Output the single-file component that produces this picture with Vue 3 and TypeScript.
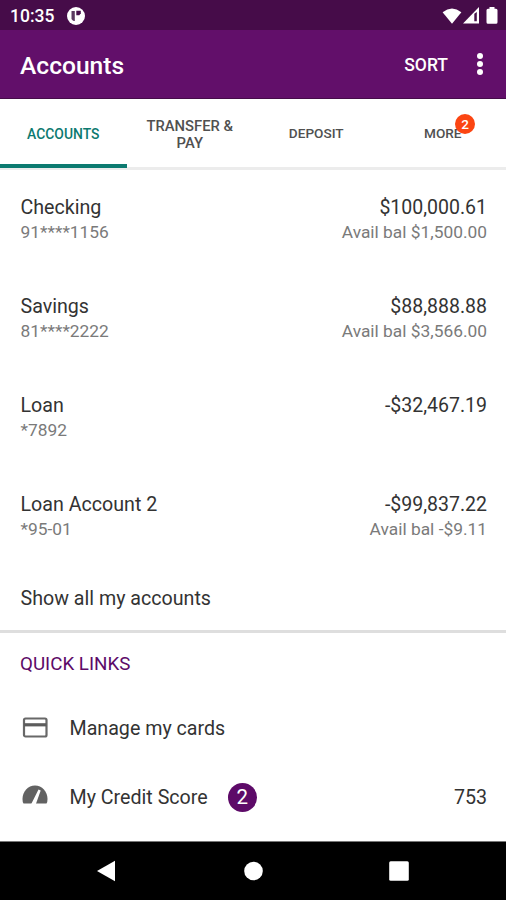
<script setup lang="ts">
interface Account {
  name: string
  number: string
  balance: string
  available?: string
}

interface Tab {
  label: string
  active?: boolean
  wrapped?: boolean
  badge?: number
}

const tabs: Tab[] = [
  { label: 'ACCOUNTS', active: true },
  { label: 'TRANSFER & PAY', wrapped: true },
  { label: 'DEPOSIT' },
  { label: 'MORE', badge: 2 },
]

const accounts: Account[] = [
  { name: 'Checking', number: '91****1156', balance: '$100,000.61', available: '$1,500.00' },
  { name: 'Savings', number: '81****2222', balance: '$88,888.88', available: '$3,566.00' },
  { name: 'Loan', number: '*7892', balance: '-$32,467.19' },
  { name: 'Loan Account 2', number: '*95-01', balance: '-$99,837.22', available: '-$9.11' },
]
</script>

<template>
  <div class="screen">
    <div class="status-bar">
      <span class="clock">10:35</span>
      <svg class="app-icon" width="18" height="18" viewBox="0 0 18 18">
        <circle cx="9" cy="9" r="9" fill="#fff" />
        <path d="M4.500 4h3.300v10H6.800A5 5 0 0 1 4.500 12z" fill="#5a3a60" />
        <path d="M9.300 3.800h4.500v2.500l-1.500 2H9.300z" fill="#46104b" />
      </svg>
      <div class="status-icons">
        <svg class="wifi" width="20" height="16" viewBox="0 0 20 16">
          <path d="M.6 4.200Q10-3.200 19.400 4.200L10 15.800z" fill="#fff" />
        </svg>
        <svg class="signal" width="16" height="17" viewBox="0 0 16 17">
          <path d="M0 16.500L16 0v16.500z" fill="#fff" />
          <path d="M11.300 6.800L13.800 5v9.300h-2.500z" fill="#461049" />
        </svg>
        <svg class="battery" width="12" height="17" viewBox="0 0 12 17">
          <path d="M3.500 0h5v1.800H10q1.500 0 1.500 1.500v12q0 1.500-1.500 1.500H2Q.5 16.800.5 15.300v-12Q.5 1.800 2 1.800h1.500z" fill="#fff" />
        </svg>
      </div>
    </div>

    <header class="app-bar">
      <h1>Accounts</h1>
      <button class="sort">SORT</button>
      <button class="overflow" aria-label="More options">
        <i></i><i></i><i></i>
      </button>
    </header>

    <nav class="tabs">
      <button
        v-for="tab in tabs"
        :key="tab.label"
        class="tab"
        :class="{ active: tab.active, wrapped: tab.wrapped }"
      >
        <span class="tab-label">{{ tab.label }}<span v-if="tab.badge" class="tab-badge">{{ tab.badge }}</span></span>
      </button>
    </nav>

    <main class="content">
      <section class="accounts">
        <div v-for="account in accounts" :key="account.number" class="account">
          <div class="column">
            <span class="primary">{{ account.name }}</span>
            <span class="secondary">{{ account.number }}</span>
          </div>
          <div class="column amounts">
            <span class="primary">{{ account.balance }}</span>
            <span v-if="account.available" class="secondary">Avail bal {{ account.available }}</span>
          </div>
        </div>
        <div class="show-all primary">Show all my accounts</div>
      </section>

      <section class="quick-links">
        <h2>QUICK LINKS</h2>
        <div class="link">
          <svg class="link-icon" width="26" height="26" viewBox="0 0 26 26">
            <rect x="2" y="2.500" width="22.500" height="18" rx="1.500" fill="none" stroke="#686868" stroke-width="2.200" />
            <path d="M2 8.800h22.500" stroke="#5c5c5c" stroke-width="3.200" />
          </svg>
          <span class="primary">Manage my cards</span>
        </div>
        <div class="link">
          <svg class="link-icon" width="26" height="26" viewBox="0 0 26 26">
            <path d="M1.500 18.500Q.5 17.500.5 14C.5 6.500 6 .5 13 .5s12.500 6 12.500 13.500q0 3.500-1 4.500z" fill="#626262" />
            <path d="M9 19.500L16.500 4.500L18.700 5.500L13.700 19.500z" fill="#fff" />
          </svg>
          <span class="primary">My Credit Score</span>
          <span class="count">2</span>
          <span class="primary score">753</span>
        </div>
      </section>
    </main>

    <footer class="nav-bar">
      <svg width="20" height="22" viewBox="0 0 20 22"><path d="M1 11L19 .8v20.400z" fill="#fff" /></svg>
      <svg width="20" height="20" viewBox="0 0 20 20"><circle cx="10.500" cy="10" r="9.300" fill="#fff" /></svg>
      <svg width="20" height="20" viewBox="0 0 20 20"><rect x=".2" y=".2" width="19.600" height="19.600" rx="1.500" fill="#fff" /></svg>
    </footer>
  </div>
</template>

<style>
body {
  margin: 0;
}
</style>

<style scoped>
.screen {
  display: flex;
  flex-direction: column;
  width: 506px;
  height: 900px;
  overflow: hidden;
  background: #fff;
  color: #333;
  font-family: Roboto, "Liberation Sans", sans-serif;
}

button {
  border: 0;
  padding: 0;
  background: none;
  color: inherit;
  font: inherit;
}

.status-bar {
  display: flex;
  align-items: center;
  flex: none;
  box-sizing: border-box;
  height: 30px;
  padding: 1px 8px 0 10px;
  background: #460c49;
  color: #fff;
}

.clock {
  width: 57px;
  font-size: 17.500px;
  font-weight: 500;
  line-height: 30px;
}

.status-icons {
  display: flex;
  align-items: center;
  margin-left: auto;
}

.signal {
  margin-left: 1px;
}

.battery {
  margin-left: 7px;
}

.app-bar {
  display: flex;
  align-items: center;
  flex: none;
  box-sizing: border-box;
  height: 69px;
  padding: 0 20px;
  border-bottom: 1px solid #460c49;
  background: #620f6a;
  color: #fff;
}

h1 {
  flex: 1;
  margin: 0;
  padding-top: 3px;
  font-size: 24.600px;
  font-weight: 500;
  line-height: 30px;
}

.sort {
  padding-top: 2px;
  font-size: 17.500px;
  font-weight: 500;
}

.overflow {
  display: flex;
  flex-direction: column;
  gap: 2px;
  margin-left: 29px;
  margin-right: 3px;
}

.overflow i {
  width: 6px;
  height: 6px;
  border-radius: 50%;
  background: #fff;
}

.tabs {
  display: grid;
  grid-template-columns: repeat(4, 1fr);
  flex: none;
  box-sizing: border-box;
  height: 71px;
  border-bottom: 3px solid #ececec;
}

.tab {
  display: flex;
  align-items: center;
  justify-content: center;
  box-sizing: border-box;
  height: 69px;
  padding: 4px 16px 0;
  border-bottom: 4px solid transparent;
  color: #505050;
  font-size: 13.600px;
  font-weight: 500;
  line-height: 17px;
}

.tab.wrapped {
  padding-top: 6px;
  font-size: 14.800px;
}

.tab.active {
  padding-top: 6px;
  border-bottom-color: #0c7a70;
  color: #0c7a70;
  font-size: 13.900px;
}

.tab-label {
  position: relative;
}

.tab-badge {
  position: absolute;
  top: -11px;
  left: 31px;
  width: 20px;
  height: 20px;
  border-radius: 50%;
  background: #fb4512;
  color: #fff;
  font-size: 13.500px;
  line-height: 20px;
}

.account {
  display: flex;
  justify-content: space-between;
  box-sizing: border-box;
  height: 99px;
  padding: 26px 19px 0 20.500px;
}

.column {
  display: flex;
  flex-direction: column;
}

.amounts {
  align-items: flex-end;
}

.primary {
  color: #333;
  font-size: 19.650px;
  line-height: 24px;
}

.amounts .primary {
  font-size: 19.500px;
}

.secondary {
  color: #7a7a7a;
  font-size: 17.350px;
  line-height: 24px;
}

.show-all {
  height: 64px;
  padding-top: 1px;
  padding-left: 20.500px;
  box-sizing: border-box;
  line-height: 64px;
}

.quick-links {
  border-top: 3px solid #dedede;
}

h2 {
  box-sizing: border-box;
  height: 61px;
  margin: 0;
  padding-top: 1px;
  padding-left: 20px;
  color: #5d0a68;
  font-size: 18.800px;
  font-weight: 400;
  line-height: 61px;
}

.link {
  display: flex;
  align-items: center;
  height: 69px;
  padding: 0 19px 0 22px;
}

.link-icon {
  margin-right: 21.500px;
}

.count {
  width: 29px;
  height: 29px;
  margin-left: 20px;
  border-radius: 50%;
  background: #5d0a68;
  color: #fff;
  font-size: 20.500px;
  line-height: 29px;
  text-align: center;
}

.score {
  margin-left: auto;
}

.nav-bar {
  display: flex;
  align-items: center;
  justify-content: space-between;
  box-sizing: border-box;
  height: 59px;
  margin-top: auto;
  padding: 0 97px 0 96px;
  border-top: 1px solid #777;
  background: #000;
}
</style>
